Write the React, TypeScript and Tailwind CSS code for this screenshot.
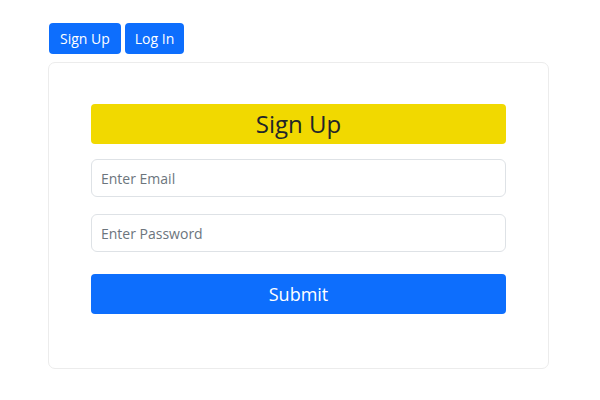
export default function App() {
  return (
    <div className="min-h-screen bg-white font-['Open_Sans',sans-serif] text-[#212529]">
      <div className="pl-[48px] pt-[23px]">
        <div className="ml-px flex gap-[4px]">
          <button className="h-[31px] rounded-[4px] bg-[#0d6efd] px-[11px] text-[14px] text-white">Sign Up</button>
          <button className="h-[31px] rounded-[4px] bg-[#0d6efd] px-[10px] text-[14px] text-white">Log In</button>
        </div>
        <div className="mt-[8px] w-[501px] rounded-[7px] border border-[#ececec] px-[42px] pt-[41px] pb-[54px]">
          <div className="flex h-[40px] items-center justify-center rounded-[4px] bg-[#f1d900] text-[24px] text-[#212529]">
            Sign Up
          </div>
          <input
            placeholder="Enter Email"
            className="mt-[15px] block h-[38px] w-full rounded-[6px] border border-[#dee2e6] px-[9px] text-[14px] placeholder:text-[#6c757d] outline-none"
          />
          <input
            placeholder="Enter Password"
            className="mt-[17px] block h-[38px] w-full rounded-[6px] border border-[#dee2e6] px-[9px] text-[14px] placeholder:text-[#6c757d] outline-none"
          />
          <button className="mt-[22px] block h-[40px] w-full rounded-[4px] bg-[#0d6efd] text-[18px] text-white">
            Submit
          </button>
        </div>
      </div>
    </div>
  );
}
